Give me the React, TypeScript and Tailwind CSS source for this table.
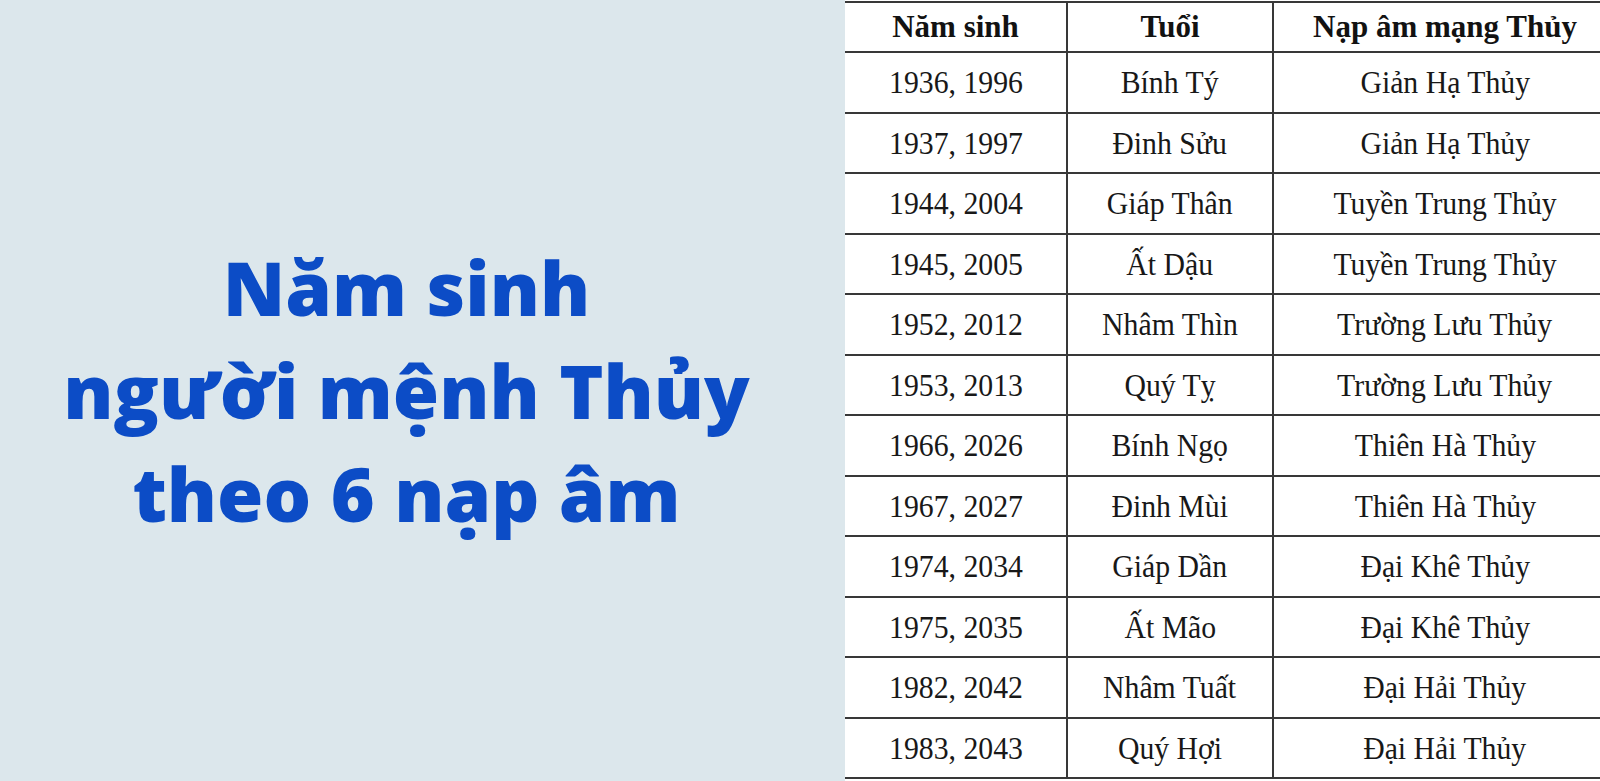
const rows: [string, string, string][] = [
  ["1936, 1996", "Bính Tý", "Giản Hạ Thủy"],
  ["1937, 1997", "Đinh Sửu", "Giản Hạ Thủy"],
  ["1944, 2004", "Giáp Thân", "Tuyền Trung Thủy"],
  ["1945, 2005", "Ất Dậu", "Tuyền Trung Thủy"],
  ["1952, 2012", "Nhâm Thìn", "Trường Lưu Thủy"],
  ["1953, 2013", "Quý Tỵ", "Trường Lưu Thủy"],
  ["1966, 2026", "Bính Ngọ", "Thiên Hà Thủy"],
  ["1967, 2027", "Đinh Mùi", "Thiên Hà Thủy"],
  ["1974, 2034", "Giáp Dần", "Đại Khê Thủy"],
  ["1975, 2035", "Ất Mão", "Đại Khê Thủy"],
  ["1982, 2042", "Nhâm Tuất", "Đại Hải Thủy"],
  ["1983, 2043", "Quý Hợi", "Đại Hải Thủy"],
]

const headers = ["Năm sinh", "Tuổi", "Nạp âm mạng Thủy"]

function Cell({ text, last, head }: { text: string; last?: boolean; head?: boolean }) {
  return (
    <div
      className={
        "flex items-center justify-center border-b-2 border-[#383838] " +
        (last ? "" : "border-r-2 ") +
        (head ? "h-[50px]" : "h-[60.5px]")
      }
    >
      {head ? (
        <span className="text-[31px] font-bold text-[#121212]">{text}</span>
      ) : (
        <span className="inline-block scale-x-[0.93] text-[32px] text-[#181818]">{text}</span>
      )}
    </div>
  )
}

export default function App() {
  return (
    <div className="flex h-[781px] w-[1600px] overflow-hidden bg-white">
      <div className="flex w-[845px] shrink-0 items-center justify-center bg-[#dce7ec] pr-[32px]">
        <h1
          className="text-center text-[75px] font-extrabold leading-[103px] text-[#0c4cc6]"
          style={{ fontFamily: '"Open Sans", sans-serif' }}
        >
          Năm sinh
          <br />
          người mệnh Thủy
          <br />
          theo 6 nạp âm
        </h1>
      </div>
      <div className="pt-[1px]" style={{ fontFamily: '"Liberation Serif", "Times New Roman", serif' }}>
        <div className="grid w-[771px] grid-cols-[223px_206px_342px] border-t-2 border-[#383838]">
          {headers.map((h, i) => (
            <Cell key={h} text={h} head last={i === 2} />
          ))}
          {rows.map((r) =>
            r.map((t, i) => <Cell key={r[0] + i} text={t} last={i === 2} />)
          )}
        </div>
      </div>
    </div>
  )
}
